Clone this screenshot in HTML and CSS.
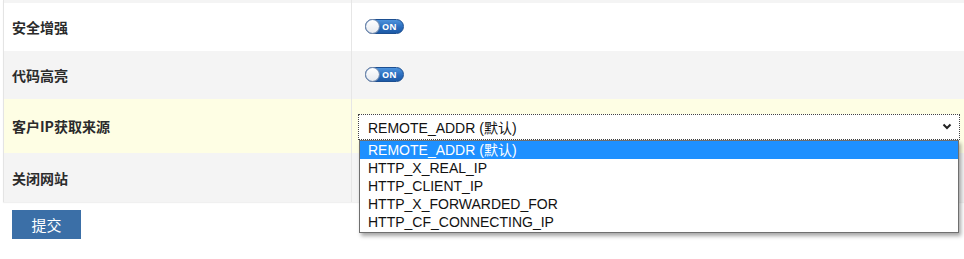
FILE: index.html
```html
<!DOCTYPE html>
<html lang="zh">
<head>
<meta charset="utf-8">
<title>设置</title>
<link rel="stylesheet" href="styles.css">
</head>
<body>
<div class="settings">
  <div class="row row-top"><div class="label"></div><div class="field"></div></div>
  <div class="row row-white">
    <div class="label">安全增强</div>
    <div class="field"><span class="toggle"><span class="knob"></span><span class="on">ON</span></span></div>
  </div>
  <div class="row row-gray">
    <div class="label">代码高亮</div>
    <div class="field"><span class="toggle"><span class="knob"></span><span class="on">ON</span></span></div>
  </div>
  <div class="row row-yellow row-tall">
    <div class="label">客户IP获取来源</div>
    <div class="field field-select">
      <div class="select">
        <span class="select-value">REMOTE_ADDR (默认)</span>
        <svg class="chevron" width="10" height="7" viewBox="0 0 10 7"><polyline points="1.5,1.5 5,5 8.5,1.5" fill="none" stroke="#222" stroke-width="2"/></svg>
        <ul class="dropdown">
          <li class="opt selected">REMOTE_ADDR (默认)</li>
          <li class="opt">HTTP_X_REAL_IP</li>
          <li class="opt">HTTP_CLIENT_IP</li>
          <li class="opt">HTTP_X_FORWARDED_FOR</li>
          <li class="opt">HTTP_CF_CONNECTING_IP</li>
        </ul>
      </div>
    </div>
  </div>
  <div class="row row-gray row-last">
    <div class="label">关闭网站</div>
    <div class="field"></div>
  </div>
</div>
<button class="submit" type="button">提交</button>
</body>
</html>
```

FILE: styles.css
```css
html, body {
  margin: 0;
  padding: 0;
  background: #ffffff;
}
body {
  font-family: "Liberation Sans", "Noto Sans CJK SC", Arial, sans-serif;
  color: #333;
  width: 964px;
  height: 259px;
  overflow: hidden;
}
.settings {
  margin-left: 3px;
  border-left: 1px solid #e4e4e4;
  box-shadow: 0 1px 1px rgba(0,0,0,0.06);
}
.row {
  display: grid;
  grid-template-columns: 348px 1fr;
  height: 48px;
}
.row-top { height: 3px; background: #f4f4f4; }
.row-white { background: #ffffff; }
.row-gray { background: #f4f4f4; }
.row-yellow { background: #fefee4; }
.row-tall { height: 54px; }
.row-last { height: 49px; }
.label {
  display: flex;
  align-items: center;
  padding-left: 8px;
  border-right: 1px solid #e6e6e6;
  font-family: "Noto Sans CJK SC", "Liberation Sans", sans-serif;
  font-size: 14px;
  font-weight: 700;
  color: #2b2b2b;
}
.field {
  display: flex;
  align-items: center;
  padding-left: 13px;
}
.field-select {
  padding-left: 6px;
  padding-right: 4px;
}
.toggle {
  position: relative;
  display: inline-flex;
  align-items: center;
  width: 37px;
  height: 13px;
  border: 1px solid #1c4f91;
  border-radius: 8px;
  background: linear-gradient(to bottom, #4d93dd 0%, #2a6cbd 55%, #1d5aa6 100%);
  margin-top: -1px;
}
.knob {
  position: absolute;
  left: 0;
  top: 0;
  width: 13px;
  height: 13px;
  border-radius: 50%;
  background: linear-gradient(to bottom, #ffffff, #e6e9ee);
  box-shadow: 0 0 0 1px #7b8fae;
}
.on {
  margin-left: 16px;
  font-family: "Open Sans", "Liberation Sans", sans-serif;
  font-size: 9px;
  font-weight: 700;
  color: #fff;
  line-height: 13px;
  letter-spacing: 0.2px;
}
.select {
  position: relative;
  flex: 1;
  height: 24px;
  display: flex;
  align-items: center;
  background: #fff;
  border: 1px dotted #444;
  padding-left: 9px;
  font-family: "Liberation Sans", "Noto Sans CJK SC", sans-serif;
  font-size: 14px;
  color: #111;
  margin-top: 1px;
}
.select-value { flex: 1; }
.chevron {
  margin-right: 7px;
}
.dropdown {
  position: absolute;
  left: 0;
  top: 25px;
  width: 598px;
  margin: 0;
  padding: 0 0 1px 0;
  list-style: none;
  background: #fff;
  border: 1px solid #6f6f6f;
  box-shadow: 2px 3px 4px rgba(0,0,0,0.35);
  z-index: 5;
}
.opt {
  height: 18px;
  line-height: 18px;
  padding-left: 8px;
  color: #111;
  font-size: 14px;
  white-space: nowrap;
}
.opt.selected {
  background: #1e90ff;
  color: #fff;
}
.submit {
  display: block;
  margin: 8px 0 0 12px;
  width: 69px;
  height: 29px;
  padding: 0;
  border: none;
  background: #3b6fa7;
  color: #fff;
  font-family: "Noto Sans CJK SC", sans-serif;
  font-size: 15px;
  cursor: pointer;
}
```
